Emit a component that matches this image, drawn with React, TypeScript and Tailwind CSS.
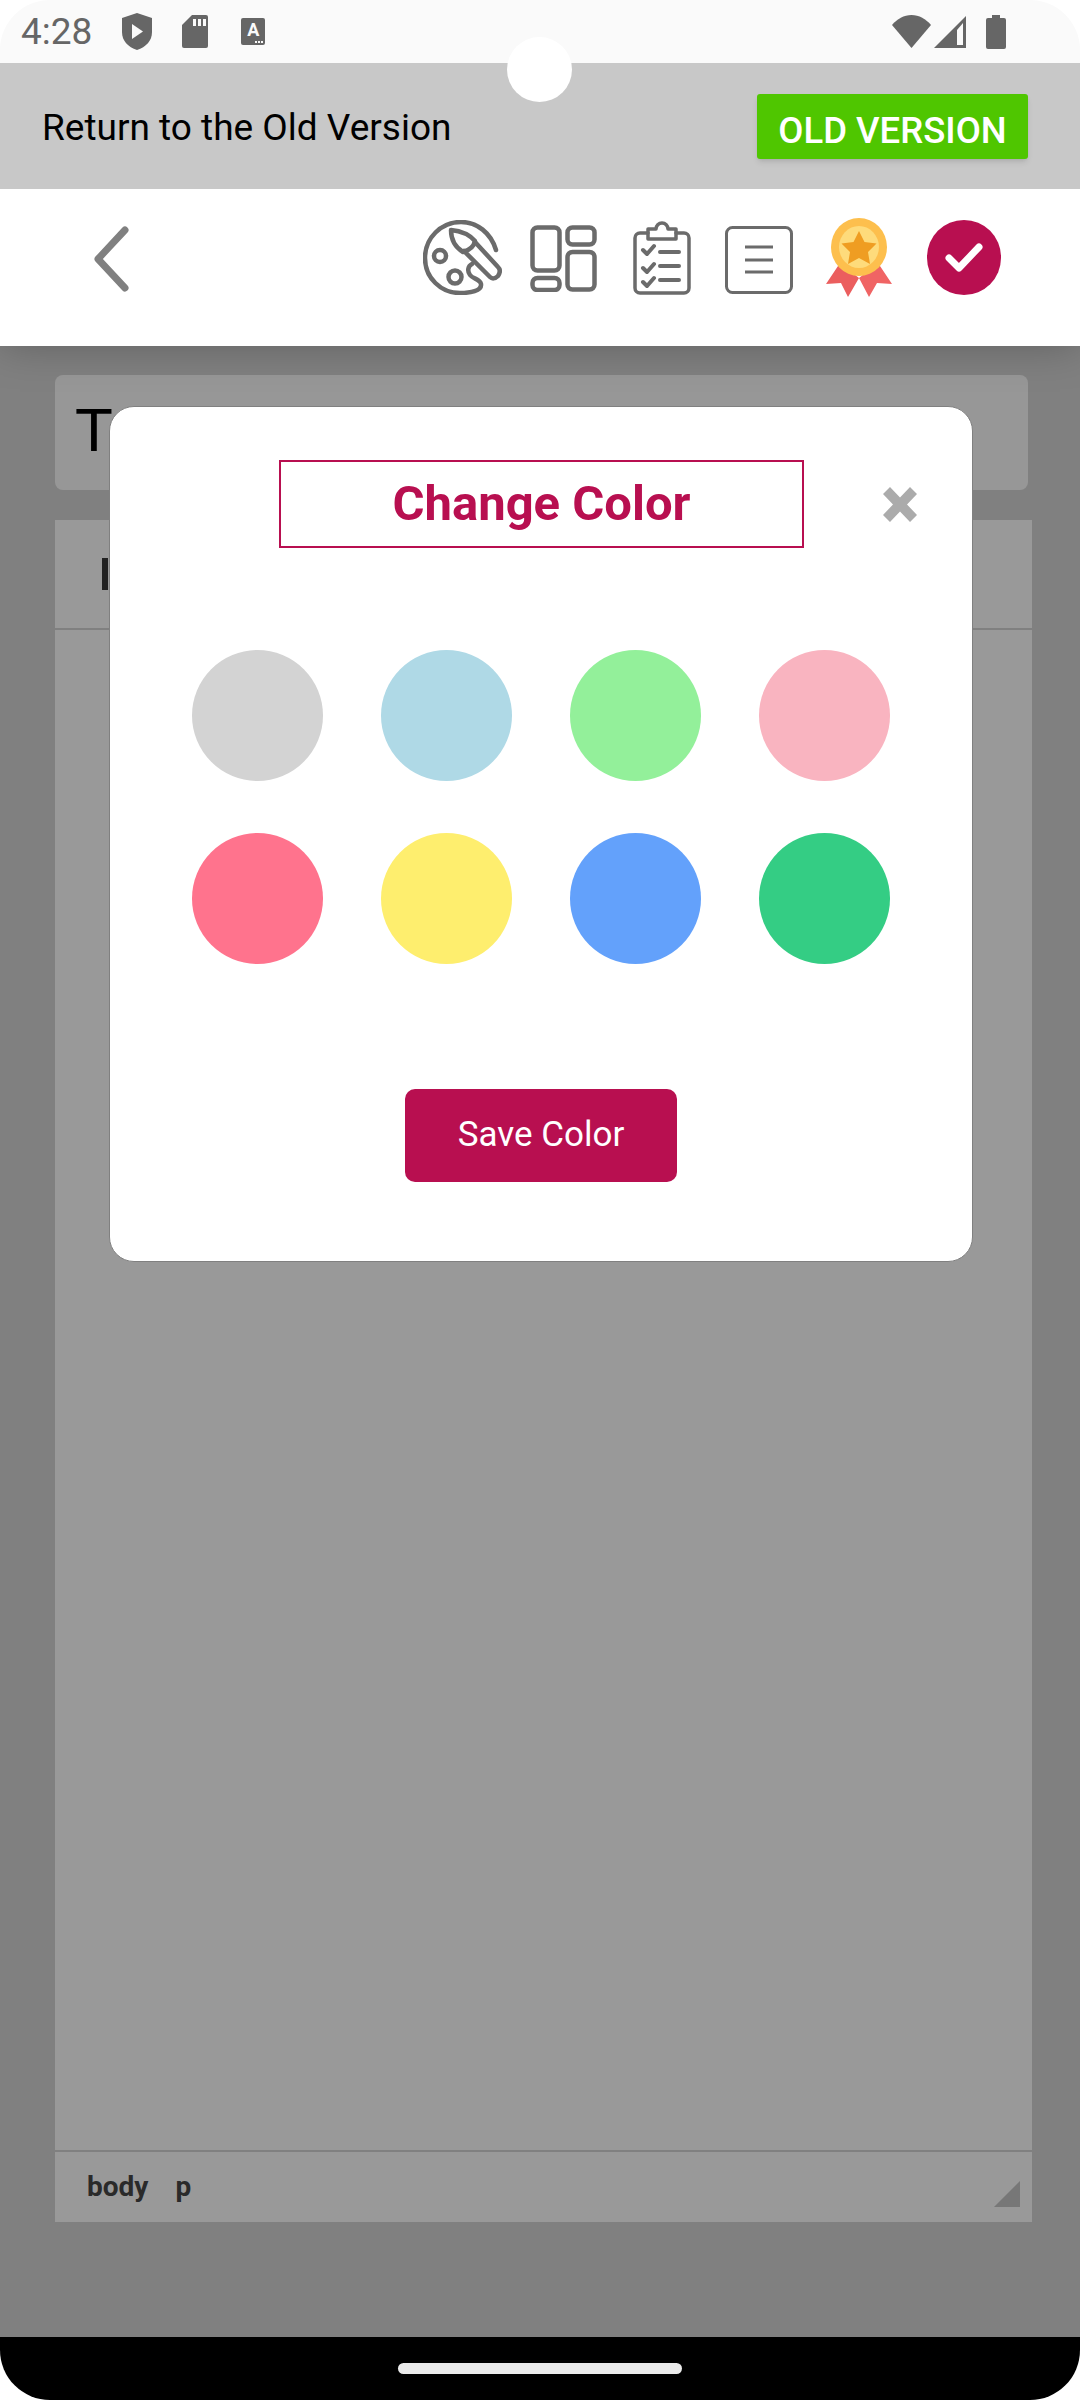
const roboto = { fontFamily: 'Roboto, sans-serif' }

const swatches = ['#d3d3d3', '#afd9e6', '#93f09a', '#f9b4c0', '#ff738d', '#feee6e', '#63a1fb', '#34cd84']

const StatusIcons = () => (
  <div className="flex items-center ml-[30px]">
    <svg width="30" height="37" viewBox="0 0 30 37" className="mr-[30px]">
      <path d="M15 0 30 5v14c0 9-6 15-15 18C6 34 0 28 0 19V5z" fill="#666" />
      <path d="M10 11l11 7.500-11 7.500z" fill="#fafafa" />
    </svg>
    <svg width="26" height="33" viewBox="0 0 26 33" className="mr-[33px]">
      <path d="M10 0h14a2 2 0 0 1 2 2v29a2 2 0 0 1-2 2H2a2 2 0 0 1-2-2V10z" fill="#666" />
      <path d="M11 4h3v7h-3zM16 4h3v7h-3zM21 4h3v7h-3z" fill="#fafafa" />
    </svg>
    <div className="relative w-[24px] h-[27px] bg-[#666] rounded-[2px] flex justify-center pt-[3px] text-[#fafafa] text-[18px] font-bold leading-none">
      A
      <div className="absolute right-[2px] bottom-[2px] flex gap-[1px]">
        <div className="w-[2px] h-[2px] bg-[#fafafa]" />
        <div className="w-[2px] h-[2px] bg-[#fafafa]" />
        <div className="w-[2px] h-[2px] bg-[#fafafa]" />
      </div>
    </div>
  </div>
)

const SystemIcons = () => (
  <div className="flex items-center">
    <svg width="39" height="33" viewBox="0 0 39 33">
      <path d="M0 10C5 4 12 0 19.500 0S34 4 39 10L19.500 33z" fill="#666" />
    </svg>
    <svg width="32" height="32" viewBox="0 0 32 32" className="ml-[3px]">
      <path d="M32 0v32H0z" fill="#666" />
      <path d="M29 7 23 14v15h6z" fill="#fafafa" />
    </svg>
    <svg width="20" height="34" viewBox="0 0 20 34" className="ml-[20px]">
      <path d="M6 0h8v3h4a2 2 0 0 1 2 2v27a2 2 0 0 1-2 2H2a2 2 0 0 1-2-2V5a2 2 0 0 1 2-2h4z" fill="#666" />
    </svg>
  </div>
)

const PaletteIcon = () => (
  <svg width="79" height="75" viewBox="0 0 79 75" fill="none" stroke="#6b6b6b" strokeWidth="4.500" strokeLinejoin="round" strokeLinecap="round">
    <path d="M73 30C68 13 54 2 38 2 18 2 2 18 2 38s16 35 35 35c10 0 22-2 21-9-1-5-8-5-11-9-3-4-2-9 2-11" />
    <path d="M28 10c10 1 18 4 24 11-1 5-5 9-12 11-8-5-12-13-12-22z" />
    <path d="M52 22l23 25c3 3 2 6 0 9-3 3-6 3-8 1L41 31" />
    <circle cx="17" cy="36" r="6" />
    <circle cx="32" cy="57" r="6.500" />
  </svg>
)

const LayoutIcon = () => (
  <svg width="67" height="67" viewBox="0 0 67 67" fill="none" stroke="#6b6b6b" strokeWidth="4.500">
    <rect x="2.500" y="2.500" width="27" height="43" rx="5" />
    <rect x="37.500" y="2.500" width="27" height="17" rx="5" />
    <rect x="37.500" y="27" width="27" height="37.500" rx="5" />
    <rect x="2.500" y="53" width="27" height="12" rx="5" />
  </svg>
)

const ClipboardIcon = () => (
  <svg width="58" height="74" viewBox="0 0 58 74" fill="none" stroke="#6b6b6b" strokeWidth="3.500" strokeLinejoin="round" strokeLinecap="round">
    <path d="M15 12H7a5 5 0 0 0-5 5v50a5 5 0 0 0 5 5h44a5 5 0 0 0 5-5V17a5 5 0 0 0-5-5h-8" />
    <path d="M15 8h8a6 6 0 0 1 12 0h8v10H15z" />
    <path d="M10 29l4 4 7-8M10 47l4 4 7-8M10 61l4 4 7-8" strokeWidth="4" />
    <path d="M27 31h19M27 45h19M27 59h19" strokeWidth="4" />
  </svg>
)

const DocIcon = () => (
  <svg width="68" height="68" viewBox="0 0 68 68" fill="none" stroke="#6b6b6b">
    <rect x="1.500" y="1.500" width="65" height="65" rx="6" strokeWidth="3" />
    <path d="M20 21h28M20 34h28M20 46h28" strokeWidth="3" />
  </svg>
)

const MedalIcon = () => (
  <svg width="66" height="79" viewBox="0 0 66 79">
    <path d="M14 45 0 66l15-1 7 14 11-19z" fill="#eb5e5e" />
    <path d="M52 45 66 66l-15-1-8 14-10-19z" fill="#f06464" />
    <ellipse cx="33" cy="29" rx="28" ry="29" fill="#fdbf4d" />
    <ellipse cx="33" cy="29" rx="20" ry="21" fill="#fedb7b" />
    <path d="M33 13l5.500 11 12 1.500-8.500 8.500 2 12-11-6-11 6 2-12-8.500-8.500 12-1.500z" fill="#ef9d22" />
  </svg>
)

const CheckBadge = () => (
  <div className="w-[74px] h-[75px] rounded-full bg-[#b80f50] flex items-center justify-center">
    <svg width="38" height="30" viewBox="0 0 38 30" fill="none" stroke="#fff" strokeWidth="7" strokeLinecap="round" strokeLinejoin="round">
      <path d="M4 15l10 10L34 4" />
    </svg>
  </div>
)

const ChangeColorModal = () => (
  <div className="absolute left-[109px] top-[60px] w-[864px] h-[856px] bg-white rounded-[25px] border border-[#808080] flex flex-col">
    <div className="flex items-center mt-[53px] ml-[169px]">
      <div className="w-[525px] h-[88px] border-2 border-[#b80f50] flex items-center justify-center text-[#b80f50] text-[49px] font-bold">
        Change Color
      </div>
      <svg width="34" height="35" viewBox="0 0 34 35" className="ml-[79px]">
        <path d="M7 0 17 10.500 27 0l7 7-10 10.500 10 10.500-7 7-10-10.500L7 35l-7-7 10-10.500L0 7z" fill="#ababab" />
      </svg>
    </div>
    <div className="grid grid-cols-4 gap-x-[58px] gap-y-[52px] mt-[102px] ml-[82px] w-[698px]">
      {swatches.map((color) => (
        <div key={color} className="w-[131px] h-[131px] rounded-full" style={{ backgroundColor: color }} />
      ))}
    </div>
    <button className="self-center mt-[125px] w-[272px] h-[93px] rounded-[10px] bg-[#b80f50] text-white text-[35px]">
      Save Color
    </button>
  </div>
)

export default function App() {
  return (
    <div className="relative w-[1080px] h-[2400px] bg-white flex flex-col overflow-hidden" style={roboto}>
      <div className="h-[63px] bg-[#fafafa] rounded-t-[50px] flex items-center justify-between pl-[21px] pr-[74px]">
        <div className="flex items-center">
          <span className="text-[37px] text-[#666] leading-none">4:28</span>
          <StatusIcons />
        </div>
        <SystemIcons />
      </div>

      <div className="relative z-20 h-[126px] bg-[#c8c8c8] flex items-center justify-between pl-[42px] pr-[52px]">
        <span className="text-[37px] text-black pt-[4px]">Return to the Old Version</span>
        <button className="w-[271px] h-[65px] pt-[10px] rounded-[3px] bg-[#4fc600] text-white text-[36.500px] leading-none font-medium shadow-md">
          OLD VERSION
        </button>
      </div>

      <div className="relative z-10 h-[157px] bg-white flex items-center pl-[94px] pb-[20px] shadow-[0_0_40px_rgba(0,0,0,0.25)]">
        <svg width="35" height="66" viewBox="0 0 35 66" fill="none" stroke="#808080" strokeWidth="7" strokeLinecap="round" strokeLinejoin="round" className="mt-[3px]">
          <path d="M31 4 4 33l27 29" />
        </svg>
        <div className="flex items-center ml-[294px]">
          <PaletteIcon />
          <div className="ml-[28px] mt-[2px]"><LayoutIcon /></div>
          <div className="ml-[36px]"><ClipboardIcon /></div>
          <div className="ml-[34px] mt-[4px]"><DocIcon /></div>
          <div className="ml-[33px]"><MedalIcon /></div>
          <div className="ml-[35px]"><CheckBadge /></div>
        </div>
      </div>

      <div className="relative flex-1 bg-[#808080] flex flex-col pl-[55px] pr-[48px] pt-[29px]">
        <div className="w-[973px] h-[115px] rounded-[8px] bg-[#979797] flex items-center pl-[20px] pb-[6px]">
          <span className="text-[62px] text-black" style={{ fontFamily: '"Liberation Sans", sans-serif' }}>T</span>
        </div>
        <div className="mt-[30px] h-[1702px] bg-[#999] flex flex-col">
          <div className="h-[110px] border-b-2 border-[#808080] flex items-center pl-[47px]">
            <div className="w-[6px] h-[32px] bg-[#222]" />
          </div>
          <div className="flex-1" />
          <div className="h-[72px] border-t-2 border-[#808080] flex items-center justify-between pl-[32px] pr-[12px] text-[28px] font-bold text-[#2a2a2a]">
            <div className="flex gap-[27px] leading-none">
              <span>body</span>
              <span>p</span>
            </div>
            <svg width="26" height="26" viewBox="0 0 26 26" className="mt-[14px]">
              <path d="M26 0v26H0z" fill="#777" />
            </svg>
          </div>
        </div>
        <ChangeColorModal />
      </div>

      <div className="h-[63px] bg-black rounded-b-[50px] flex justify-center pt-[26px]">
        <div className="w-[284px] h-[11px] rounded-full bg-[#ebebeb]" />
      </div>

      <div className="absolute z-30 left-[507px] top-[37px] w-[65px] h-[65px] rounded-full bg-white" />
    </div>
  )
}
